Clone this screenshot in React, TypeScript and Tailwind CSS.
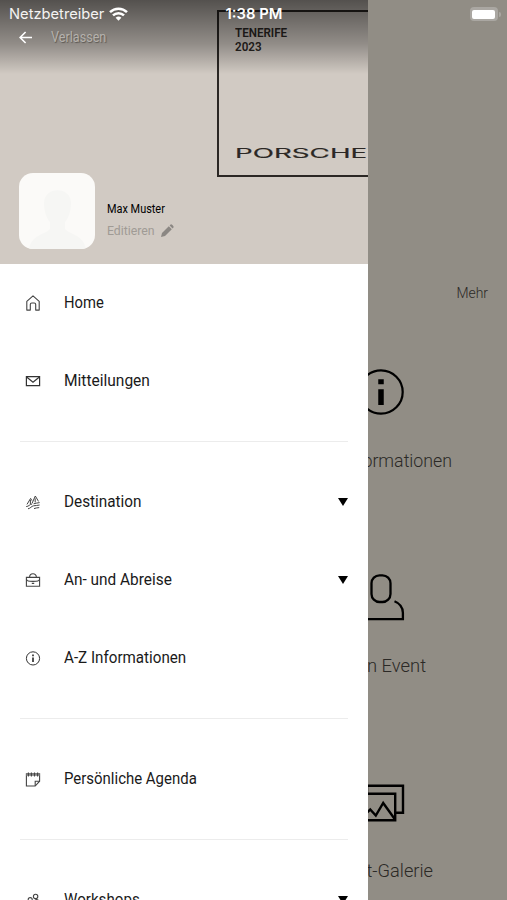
import React from "react";

type MenuItem = {
  label: string;
  icon: React.ReactNode;
  stretch: string; // Horizontal scale class of the condensed label
  expandable?: boolean;
};

type TileProps = {
  label: string;
  stretch: string;
  children: React.ReactNode;
};

const HomeIcon = () => (
  <svg className="w-4 h-4" viewBox="0 0 16 16" fill="none" stroke="#444" strokeWidth="1.1" strokeLinejoin="round">
    <path d="M1.8 6.4 8 .9l6.2 5.5v8.7h-3.5V9.6q0-1.6-1.5-1.6H6.8q-1.500 0-1.500 1.600v5.500H1.800z" />
  </svg>
);

const MailIcon = () => (
  <svg className="w-4 h-4" viewBox="0 0 16 16" fill="none" stroke="#333" strokeWidth="1.2">
    <path d="M1.4 3.7h13.2v9H1.4z" />
    <path d="m1.6 4 6.4 5.2L14.4 4" />
  </svg>
);

const DestinationIcon = () => (
  <svg className="w-4 h-4" viewBox="0 0 16 16" fill="none" stroke="#444" strokeWidth="1" strokeLinejoin="round">
    <path d="M2 10.400 5.600 4.400l1.300 2.200M5.400 6v4M7 9.400 10.300 2l3.200 5.400M10.200 4.400v4" />
    <path d="M1.200 12.600c2.800-.2 3.200-2.200 5.900-2.600M8.600 9.800c2-.8 3.600-.6 6-1.200M3 14.800c2.600-.4 3.200-2.600 5.600-3s3.600-.2 6-.8M9 14.600c1.600-.8 3-.6 5.200-1" />
  </svg>
);

const BagIcon = () => (
  <svg className="w-4 h-4" viewBox="0 0 16 16" fill="none" stroke="#444" strokeWidth="1.1">
    <path d="M1.4 5.4h13.2v8.9H1.4z" />
    <path d="M4.6 5.2c0-4.6 6.8-4.6 6.8 0M1.4 7c.4 2.2 2 2.400 6.600 2.400s6.200-.2 6.600-2.400M6.800 11.400h2.400" />
  </svg>
);

const InfoIcon = () => (
  <svg className="w-4 h-4" viewBox="0 0 16 16" fill="none" stroke="#333">
    <circle cx="8" cy="8.4" r="6.6" strokeWidth="1" />
    <path d="M8 4.6v1.7M8 7.4v4.6" strokeWidth="1.7" />
  </svg>
);

const AgendaIcon = () => (
  <svg className="w-4 h-4" viewBox="0 0 16 16" fill="none" stroke="#444" strokeWidth="1.1">
    <path d="M1.4 2.8h13.2v7.4l-4.4 4.8H1.4z" />
    <path d="M10.2 15v-4.8h4.4" />
    <path d="M1.4 3.6h13.2" strokeWidth="2.4" stroke="#888" />
    <path d="M3.4 1.6v4M6.4 1.6v4M9.5 1.6v4M12.6 1.6v4" strokeWidth="1.1" />
  </svg>
);

const WorkshopsIcon = () => (
  <svg className="w-4 h-4" viewBox="0 0 16 16" fill="none" stroke="#444" strokeWidth="1.1">
    <circle cx="10.6" cy="4.4" r="2.2" />
    <circle cx="5.2" cy="7.6" r="2" />
    <path d="M2 14.500c0-6 7-6 7 0zM9.600 8.600c2.400-2 4.800-.6 4.800 2.800H10" />
  </svg>
);

const groups: MenuItem[][] = [
  [
    { label: "Home", icon: <HomeIcon />, stretch: "scale-x-[0.87]" },
    { label: "Mitteilungen", icon: <MailIcon />, stretch: "scale-x-[0.913]" },
  ],
  [
    { label: "Destination", icon: <DestinationIcon />, stretch: "scale-x-[0.9]", expandable: true },
    { label: "An- und Abreise", icon: <BagIcon />, stretch: "scale-x-[0.905]", expandable: true },
    { label: "A-Z Informationen", icon: <InfoIcon />, stretch: "scale-x-[0.893]" },
  ],
  [{ label: "Persönliche Agenda", icon: <AgendaIcon />, stretch: "scale-x-[0.88]" }],
  [{ label: "Workshops", icon: <WorkshopsIcon />, stretch: "scale-x-[0.89]", expandable: true }],
];

const MenuRow: React.FC<MenuItem> = ({ label, icon, stretch, expandable }) => (
  <li className="h-[78px] flex items-center">
    <span className="ml-[5px] w-[38.5px] shrink-0">{icon}</span>
    <span className={`origin-left whitespace-nowrap text-[17px] text-[#1a1a1a] ${stretch}`}>{label}</span>
    {expandable && (
      <svg className="ml-auto w-[10px] h-[8px]" viewBox="0 0 10 8">
        <path d="M0 0h10L5 8z" />
      </svg>
    )}
  </li>
);

const StatusBar = () => (
  <div className="absolute inset-x-0 top-0 z-20 h-[28px] flex items-center justify-between pl-[9px] pr-[6px] text-white font-['Inter']">
    <div className="flex w-[190px] items-center gap-[5px]">
      <span className="text-[14.7px] leading-none text-[#f4f3f2]">Netzbetreiber</span>
      <svg className="w-[19px] h-[14px]" viewBox="0 0 19 14" fill="none" stroke="white" strokeWidth="2.5">
        <path d="M1 5.2a12.2 12.2 0 0 1 17 0M4 8.4a7.8 7.8 0 0 1 11 0" />
        <path d="m9.5 13.8-2.9-3a4.2 4.2 0 0 1 5.8 0z" fill="white" stroke="none" />
      </svg>
    </div>
    <span className="-ml-[2px] text-[14.8px] leading-none font-semibold">1:38 PM</span>
    <div className="flex w-[190px] items-center justify-end gap-[1px]">
      <div className="w-[28px] h-[14px] rounded-[4px] bg-[#aaa7a2] p-[2.5px]">
        <div className="h-full rounded-[2px] bg-white" />
      </div>
      <div className="h-[5px] w-[2px] rounded-r-full bg-[#aaa7a2]" />
    </div>
  </div>
);

const ProfileHeader = () => (
  <header className="relative h-[264px] shrink-0 overflow-hidden bg-[#d1cac3] flex flex-col">
    {/* Cover artwork, cut off by the edge of the drawer */}
    <div className="absolute left-[217px] top-[10px] h-[167px] w-[170px] border-2 border-[#2b2724] pl-4 pt-[14px] pb-[14px] flex flex-col justify-between text-[#2b2724]">
      <p className="origin-left whitespace-nowrap text-[12.5px] leading-[13.5px] font-semibold scale-x-[0.93]">
        TENERIFE
        <br />
        2023
      </p>
      <span className="origin-left whitespace-nowrap font-['Inter'] text-[12.5px] leading-[14px] scale-x-[2.22] [-webkit-text-stroke:0.15px_#2b2724]">
        PORSCHE
      </span>
    </div>
    <div className="absolute inset-x-0 top-0 h-[74px] bg-linear-to-b from-black/60 via-black/30 via-60% to-transparent" />

    <div className="relative mt-[28px] ml-[19px] flex h-[19px] items-center">
      <svg className="w-[13px] h-[13px]" viewBox="0 0 13 13" fill="none" stroke="white" strokeWidth="1.6">
        <path d="M13 6.5H1.2M6.6 1 1.1 6.5 6.6 12" />
      </svg>
      <span className="ml-[19px] origin-left text-[14.5px] text-[#b5b1ac] scale-x-[0.87] [text-shadow:1px_1px_1px_#5c5853]">
        Verlassen
      </span>
    </div>

    <div className="relative mt-auto mb-[15px] ml-[19px] flex">
      <div className="w-[76px] h-[76px] overflow-hidden rounded-[14px] bg-[#fbfaf8]">
        <svg viewBox="0 0 76 76" fill="#f6f6f4">
          <path d="M25 30c0-17 27-17 27 0 0 9-3 16-6 19v7c5 6 18 5 21 20H10c3-15 16-14 21-20v-7c-3-3-6-10-6-19z" />
        </svg>
      </div>
      <div className="ml-3 flex flex-col pt-[27px]">
        <span className="origin-left whitespace-nowrap text-[12px] leading-[18px] text-black scale-x-[0.91]">Max Muster</span>
        <div className="mt-[3px] flex items-center">
          <span className="w-[54px] origin-left text-[13.5px] leading-[18px] text-[#a09b95] scale-x-[0.91]">Editieren</span>
          <svg className="w-[13px] h-[13px]" viewBox="0 0 13 13" fill="#8b8783">
            <path d="m0 13 1-4 6.8-6.8 3 3L4 12zM8.6 1.5 9.7.4c.7-.7 3.6 2.2 2.9 2.9L11.6 4.4z" />
          </svg>
        </div>
      </div>
    </div>
  </header>
);

const Tile: React.FC<TileProps> = ({ label, stretch, children }) => (
  <li className="h-[205px] flex flex-col items-center">
    <div className="h-[48px]">{children}</div>
    <span className={`mt-[31px] pl-px whitespace-nowrap text-[19px] leading-[27px] font-light text-[#2b2926] ${stretch}`}>
      {label}
    </span>
  </li>
);

const App: React.FC = () => {
  return (
    <div className="relative flex h-[900px] w-[507px] overflow-hidden bg-[#918d85] font-['Roboto',sans-serif]">
      <StatusBar />

      <nav className="z-10 flex w-[368px] shrink-0 flex-col bg-white">
        <ProfileHeader />
        <div className="flex flex-col gap-[21px] px-5">
          {groups.map((group, i) => (
            <React.Fragment key={i}>
              {i > 0 && <hr className="border-[#ececec]" />}
              <ul>
                {group.map((item) => (
                  <MenuRow key={item.label} {...item} />
                ))}
              </ul>
            </React.Fragment>
          ))}
        </div>
      </nav>

      {/* Dimmed start page behind the drawer */}
      <main className="flex flex-1 flex-col items-end overflow-hidden pt-[282px]">
        <span className="mr-[19px] origin-right text-[15px] leading-[22px] font-light text-[#2b2926] scale-x-[0.93]">Mehr</span>
        <ul className="mt-[64px] w-[253px] shrink-0">
          <Tile label="A-Z Informationen" stretch="scale-x-[0.935]">
            <svg className="w-12 h-12" viewBox="0 0 48 48" fill="none" stroke="black">
              <circle cx="24" cy="24" r="21.7" strokeWidth="2.2" />
              <path d="M24 11.3v5M24 21.3v15.7" strokeWidth="5.5" />
            </svg>
          </Tile>
          <Tile label="Mein Event" stretch="scale-x-[0.97] ml-[2px]">
            <svg className="w-12 h-12" viewBox="0 0 48 48" fill="none" stroke="black" strokeWidth="2.3">
              <rect x="14.5" y="2.3" width="19" height="26.7" rx="8" />
              <path d="M37.5 28.2c5.5 2.3 8.4 6 8.4 11.5v6.5h-43.800v-6.500c0-5.500 2.900-9.200 8.400-11.500" />
            </svg>
          </Tile>
          <Tile label="Event-Galerie" stretch="scale-x-[0.96]">
            <svg className="w-12 h-12" viewBox="0 0 48 48" fill="none" stroke="black" strokeWidth="2.4">
              <path d="M10 15V7.800h36v27h-8" />
              <path d="M2 15.700h36.200v26.500H2z" />
              <path d="m4 40 9.200-8.500 5.600 6 7.400-12.500 11.500 16" />
            </svg>
          </Tile>
        </ul>
      </main>
    </div>
  );
};

export default App;
